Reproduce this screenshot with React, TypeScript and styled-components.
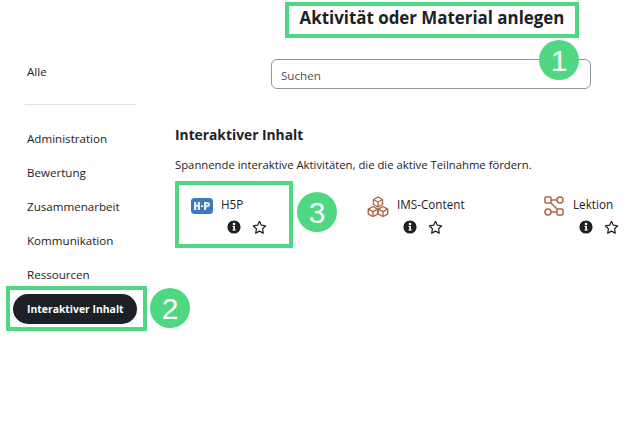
import React from 'react';
import styled, { createGlobalStyle } from 'styled-components';

const green = '#4fd881';
const ink = '#1d2125';
const iconBrown = '#ad6549';

const GlobalStyles = createGlobalStyle`
  html, body {
    margin: 0;
    background: #fff;
    color: ${ink};
    font-family: 'Open Sans', 'Noto Sans', sans-serif;
    overflow: hidden;
  }
  * { box-sizing: border-box; }
`;

const Page = styled.div`
  position: relative;
  width: 638px;
  height: 432px;
  padding-top: 2px;
`;

const Header = styled.header`
  display: flex;
  padding-left: 285px;
`;

const Title = styled.h1`
  margin: 0;
  width: 294px;
  height: 36px;
  border: 4px solid ${green};
  font-size: 16.9px;
  font-weight: 700;
  line-height: 23px;
  text-align: center;
  white-space: nowrap;
`;

const Body = styled.div`
  display: grid;
  grid-template-columns: 175px 1fr;
`;

const Sidebar = styled.aside`
  padding-left: 6px;
`;

const AllLink = styled.div`
  padding: 25px 0 0 21px;
  height: 66px;
  font-size: 11.6px;
  font-weight: 500;
  line-height: 18px;
`;

const Divider = styled.hr`
  margin: 0 0 0 19px;
  width: 112px;
  border: 0;
  border-top: 1px solid #dee2e6;
`;

const NavList = styled.nav`
  display: flex;
  flex-direction: column;
  padding-top: 25px;
`;

const NavItem = styled.div`
  height: 34px;
  padding-left: 21px;
  font-size: 11.6px;
  font-weight: 500;
  line-height: 18px;
`;

const ActiveFrame = styled.div`
  width: 141px;
  height: 45px;
  margin-top: -14px;
  padding: 4px 6px 0 3px;
  border: 4px solid ${green};
`;

const ActivePill = styled.div`
  height: 30px;
  padding-left: 14px;
  border-radius: 15px;
  background: ${ink};
  color: #fff;
  font-size: 10.4px;
  font-weight: 700;
  line-height: 30px;
  white-space: nowrap;
`;

const Main = styled.main`
  min-width: 0;
`;

const SearchRow = styled.div`
  padding: 21px 0 0 96px;
`;

const SearchInput = styled.div`
  width: 320px;
  height: 30px;
  padding-left: 9px;
  border: 1px solid #8f959e;
  border-radius: 6px;
  color: #495057;
  font-size: 11.6px;
  line-height: 31px;
`;

const SectionTitle = styled.h2`
  margin: 35px 0 0;
  font-size: 13.8px;
  font-weight: 700;
  line-height: 22px;
`;

const SectionText = styled.p`
  margin: 10px 0 0;
  font-size: 11.3px;
  line-height: 17px;
  white-space: nowrap;
`;

const Cards = styled.div`
  display: grid;
  grid-template-columns: repeat(3, 176px);
  margin-top: 8px;
`;

const Card = styled.div<{ $highlight?: boolean }>`
  display: grid;
  grid-template-columns: 22px 1fr;
  grid-template-rows: 20px 22px;
  column-gap: 8px;
  align-content: start;
  width: 118px;
  height: 67px;
  padding: 10px 0 0 12px;
  border: 4px solid ${p => (p.$highlight ? green : 'transparent')};
`;

const CardIcon = styled.div`
  display: flex;
  align-items: center;
  justify-content: center;
  margin-top: 2px;
`;

const CardName = styled.div`
  font-size: 11.7px;
  line-height: 18px;
  white-space: nowrap;
`;

const CardActions = styled.div`
  grid-column: 2;
  display: flex;
  align-items: center;
  gap: 11px;
  padding: 2px 0 0 6px;
`;

const Badge = styled.div<{ $x: number; $y: number }>`
  position: absolute;
  left: ${p => p.$x - 20}px;
  top: ${p => p.$y - 20}px;
  width: 40px;
  height: 40px;
  border-radius: 50%;
  background: ${green};
  color: #fff;
  font-family: 'Liberation Sans', sans-serif;
  font-size: 30px;
  line-height: 41px;
  text-align: center;
`;

const InfoIcon = () => (
  <svg width="14" height="14" viewBox="0 0 14 14">
    <circle cx="7" cy="7" r="6.6" fill={ink} />
    <circle cx="7" cy="4" r="1.3" fill="#fff" />
    <path d="M5.5 6h2.4v3.6h.9v1H5.4v-1h.9V7h-.8z" fill="#fff" />
  </svg>
);

const StarIcon = () => (
  <svg width="15" height="15" viewBox="0 0 15 15">
    <path
      d="M7.5 1.3l1.9 3.9 4.3.6-3.1 3 .7 4.3-3.8-2-3.8 2 .7-4.3-3.1-3 4.3-.6z"
      fill="none"
      stroke={ink}
      strokeWidth="1.2"
      strokeLinejoin="round"
    />
  </svg>
);

const H5PIcon = () => (
  <svg width="22" height="16" viewBox="0 0 22 16">
    <rect x="0" y="0" width="22" height="16" rx="3.5" fill="#3f78bd" />
    <path
      d="M3 4h2.200v2.800h1.600V4H9v8H6.800V8.800H5.200V12H3zM10 7.200h2.200v1.800H10zM13 4h3c1.800 0 3 1 3 2.600S17.800 9.200 16 9.200h-.8V12H13zm2.200 1.800v1.700h.6c.6 0 1-.3 1-.9s-.4-.8-1-.8z"
      fill="#e6eef8"
    />
  </svg>
);

const CubesIcon = () => (
  <svg width="22" height="21" viewBox="0 0 22 21" fill="none" stroke={iconBrown} strokeWidth="1.4" strokeLinejoin="round">
    <path d="M11 1l4.500 2.500v5L11 11 6.500 8.500v-5z" />
    <path d="M6.500 3.500L11 6l4.500-2.500M11 6v5" />
    <path d="M6 10.500l4.700 2.600v5L6 20.500l-4.700-2.400v-5z" />
    <path d="M1.300 13.100L6 15.600l4.700-2.500M6 15.600v4.900" />
    <path d="M16 10.500l4.700 2.600v5L16 20.500l-4.700-2.400v-5z" />
    <path d="M11.300 13.100l4.700 2.500 4.700-2.500M16 15.600v4.900" />
  </svg>
);

const LessonIcon = () => (
  <svg width="20" height="20" viewBox="0 0 20 20" fill="none" stroke={iconBrown} strokeWidth="1.5">
    <rect x="1" y="1" width="6" height="6" rx="1" />
    <rect x="13" y="13" width="6" height="6" rx="1" />
    <circle cx="16" cy="4" r="3" />
    <circle cx="4" cy="16" r="3" />
    <path d="M7 4h6M7 7l6 6M7 16h6" />
  </svg>
);

const navItems = ['Administration', 'Bewertung', 'Zusammenarbeit', 'Kommunikation', 'Ressourcen'];

const activities = [
  { name: 'H5P', icon: <H5PIcon />, highlight: true },
  { name: 'IMS-Content', icon: <CubesIcon /> },
  { name: 'Lektion', icon: <LessonIcon /> },
];

export default function App() {
  return (
    <Page>
      <GlobalStyles />
      <Header>
        <Title>Aktivität oder Material anlegen</Title>
      </Header>
      <Body>
        <Sidebar>
          <AllLink>Alle</AllLink>
          <Divider />
          <NavList>
            {navItems.map(item => (
              <NavItem key={item}>{item}</NavItem>
            ))}
            <ActiveFrame>
              <ActivePill>Interaktiver Inhalt</ActivePill>
            </ActiveFrame>
          </NavList>
        </Sidebar>
        <Main>
          <SearchRow>
            <SearchInput>Suchen</SearchInput>
          </SearchRow>
          <SectionTitle>Interaktiver Inhalt</SectionTitle>
          <SectionText>Spannende interaktive Aktivitäten, die die aktive Teilnahme fördern.</SectionText>
          <Cards>
            {activities.map(a => (
              <Card key={a.name} $highlight={a.highlight}>
                <CardIcon>{a.icon}</CardIcon>
                <CardName>{a.name}</CardName>
                <CardActions>
                  <InfoIcon />
                  <StarIcon />
                </CardActions>
              </Card>
            ))}
          </Cards>
        </Main>
      </Body>
      <Badge $x={559} $y={60}>1</Badge>
      <Badge $x={170} $y={308}>2</Badge>
      <Badge $x={317} $y={212}>3</Badge>
    </Page>
  );
}
